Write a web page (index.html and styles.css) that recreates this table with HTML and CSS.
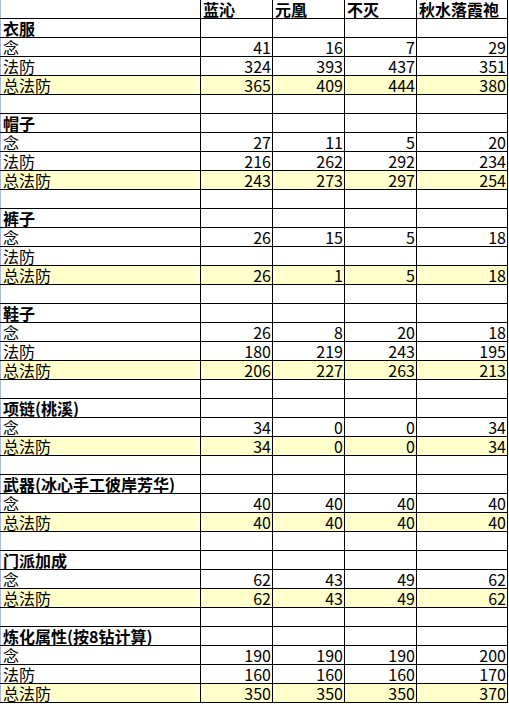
FILE: index.html
```html
<!DOCTYPE html>
<html lang="zh">
<head>
<meta charset="utf-8">
<title>法防对比</title>
<link rel="stylesheet" href="styles.css">
</head>
<body>
<table class="sheet">
  <colgroup>
    <col class="c-name"><col class="c-val"><col class="c-val"><col class="c-val"><col class="c-last">
  </colgroup>
  <tbody>
    <tr class="head"><td></td><td>蓝沁</td><td>元凰</td><td>不灭</td><td>秋水落霞袍</td></tr>

    <tr class="sec"><td>衣服</td><td></td><td></td><td></td><td></td></tr>
    <tr><td>念</td><td>41</td><td>16</td><td>7</td><td>29</td></tr>
    <tr><td>法防</td><td>324</td><td>393</td><td>437</td><td>351</td></tr>
    <tr class="total"><td>总法防</td><td>365</td><td>409</td><td>444</td><td>380</td></tr>
    <tr><td></td><td></td><td></td><td></td><td></td></tr>

    <tr class="sec"><td>帽子</td><td></td><td></td><td></td><td></td></tr>
    <tr><td>念</td><td>27</td><td>11</td><td>5</td><td>20</td></tr>
    <tr><td>法防</td><td>216</td><td>262</td><td>292</td><td>234</td></tr>
    <tr class="total"><td>总法防</td><td>243</td><td>273</td><td>297</td><td>254</td></tr>
    <tr><td></td><td></td><td></td><td></td><td></td></tr>

    <tr class="sec"><td>裤子</td><td></td><td></td><td></td><td></td></tr>
    <tr><td>念</td><td>26</td><td>15</td><td>5</td><td>18</td></tr>
    <tr><td>法防</td><td></td><td></td><td></td><td></td></tr>
    <tr class="total"><td>总法防</td><td>26</td><td>1</td><td>5</td><td>18</td></tr>
    <tr><td></td><td></td><td></td><td></td><td></td></tr>

    <tr class="sec"><td>鞋子</td><td></td><td></td><td></td><td></td></tr>
    <tr><td>念</td><td>26</td><td>8</td><td>20</td><td>18</td></tr>
    <tr><td>法防</td><td>180</td><td>219</td><td>243</td><td>195</td></tr>
    <tr class="total"><td>总法防</td><td>206</td><td>227</td><td>263</td><td>213</td></tr>
    <tr><td></td><td></td><td></td><td></td><td></td></tr>

    <tr class="sec"><td>项链(桃溪)</td><td></td><td></td><td></td><td></td></tr>
    <tr><td>念</td><td>34</td><td>0</td><td>0</td><td>34</td></tr>
    <tr class="total"><td>总法防</td><td>34</td><td>0</td><td>0</td><td>34</td></tr>
    <tr><td></td><td></td><td></td><td></td><td></td></tr>

    <tr class="sec"><td>武器(冰心手工彼岸芳华)</td><td></td><td></td><td></td><td></td></tr>
    <tr><td>念</td><td>40</td><td>40</td><td>40</td><td>40</td></tr>
    <tr class="total"><td>总法防</td><td>40</td><td>40</td><td>40</td><td>40</td></tr>
    <tr><td></td><td></td><td></td><td></td><td></td></tr>

    <tr class="sec"><td>门派加成</td><td></td><td></td><td></td><td></td></tr>
    <tr><td>念</td><td>62</td><td>43</td><td>49</td><td>62</td></tr>
    <tr class="total"><td>总法防</td><td>62</td><td>43</td><td>49</td><td>62</td></tr>
    <tr><td></td><td></td><td></td><td></td><td></td></tr>

    <tr class="sec"><td>炼化属性(按8钻计算)</td><td></td><td></td><td></td><td></td></tr>
    <tr><td>念</td><td>190</td><td>190</td><td>190</td><td>200</td></tr>
    <tr><td>法防</td><td>160</td><td>160</td><td>160</td><td>170</td></tr>
    <tr class="total"><td>总法防</td><td>350</td><td>350</td><td>350</td><td>370</td></tr>
  </tbody>
</table>
</body>
</html>
```

FILE: styles.css
```css
html, body {
  margin: 0;
  padding: 0;
  background: #ffffff;
}

.sheet {
  border-collapse: collapse;
  table-layout: fixed;
  width: 507px;
  font-family: "Noto Sans CJK SC", "Noto Sans", sans-serif;
  font-size: 16px;
  color: #000000;
  border-left: 1px solid #a9b8d6;
}

.c-name { width: 200px; }
.c-val { width: 72px; }
.c-last { width: 91px; }

.sheet td {
  height: 18px;
  padding: 0 1px 0 2px;
  line-height: 18px;
  border: 1px solid #000000;
  text-align: right;
  white-space: nowrap;
  overflow: visible;
  vertical-align: middle;
}

.sheet td:first-child {
  text-align: left;
  border-left: 1px solid #a9b8d6;
}

.sheet tr.head td {
  border-top: none;
  text-align: left;
  font-weight: 700;
}

.sheet tr.sec td:first-child {
  font-weight: 700;
}

.sheet tr.total td {
  background: #ffffcc;
}
```
